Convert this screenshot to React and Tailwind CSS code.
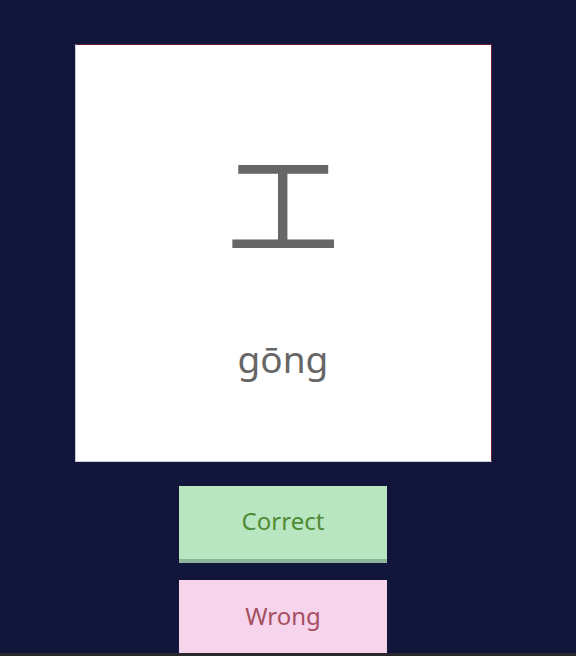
import React from 'react';

const App = () => {
  return (
    <div className="w-[576px] h-[656px] bg-[#12163a] overflow-hidden relative" style={{ fontFamily: '"Noto Sans", "Noto Sans CJK SC", sans-serif' }}>
      <div className="w-[566px] flex flex-col items-center">
        <div className="mt-[44px] w-[417px] h-[418px] bg-white border border-t-[#6b1f35] border-r-[#6b1f35] border-l-[#c9ccd8] border-b-[#c9ccd8] flex flex-col items-center text-[#666666]">
          <div className="mt-[91px] h-[124px] text-[113px] leading-[124px]" style={{ fontFamily: '"Noto Sans CJK SC", sans-serif' }}>
            工
          </div>
          <div className="mt-[77px] text-[37px] leading-[44px]">gōng</div>
        </div>
        <button className="mt-[24px] w-[208px] h-[77px] bg-[#b8e6c1] border-b-4 border-[#8fb39a] text-[#4f8a34] text-[24px] pb-[4px]">
          Correct
        </button>
        <button className="mt-[17px] w-[208px] h-[80px] bg-[#f6d4ec] text-[#a4505f] text-[24px] pb-[8px]">
          Wrong
        </button>
      </div>
      <div className="absolute left-0 bottom-0 w-full h-[3px] bg-[#2a2a2e]" />
    </div>
  );
};

export default App;
